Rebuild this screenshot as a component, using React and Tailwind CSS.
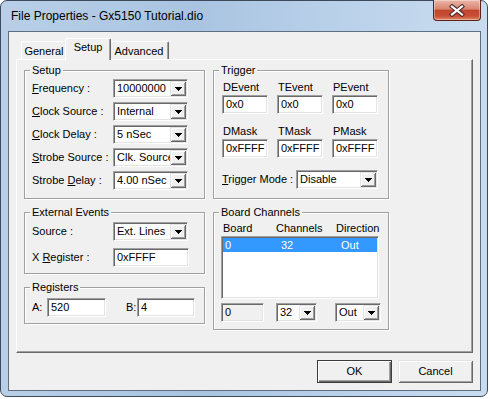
import React from "react";

const sunken =
  "border border-t-[#a0a0a0] border-l-[#a0a0a0] border-r-white border-b-white shadow-[inset_1px_1px_0_#696969,inset_-1px_-1px_0_#e3e3e3]";
const raised =
  "bg-[#f0f0f0] shadow-[inset_1px_1px_0_#e3e3e3,inset_-1px_-1px_0_#696969,inset_2px_2px_0_#fff,inset_-2px_-2px_0_#a0a0a0]";

function DownArrow() {
  return (
    <svg width="7" height="4" viewBox="0 0 7 4" shapeRendering="crispEdges">
      <path d="M0 0h7v1H0zM1 1h5v1H1zM2 2h3v1H2zM3 3h1v1H3z" fill="#000" />
    </svg>
  );
}

function Combo({ value, className = "" }) {
  return (
    <div className={`flex h-[19px] bg-white p-[1px] ${sunken} ${className}`}>
      <span className="flex-1 overflow-hidden whitespace-nowrap pl-[2px] leading-[15px]">
        {value}
      </span>
      <div className={`flex h-[15px] w-[16px] shrink-0 items-center justify-center ${raised}`}>
        <DownArrow />
      </div>
    </div>
  );
}

function Edit({ value, className = "", bg = "bg-white" }) {
  return (
    <div className={`h-[19px] p-[1px] ${bg} ${sunken} ${className}`}>
      <span className="block overflow-hidden whitespace-nowrap pl-[2px] leading-[15px]">
        {value}
      </span>
    </div>
  );
}

function Group({ title, className = "", children }) {
  return (
    <div
      className={`relative border border-[#a0a0a0] shadow-[inset_1px_1px_0_#fff,1px_1px_0_#fff] ${className}`}
    >
      <span className="absolute left-[5px] top-[-7px] bg-[#f0f0f0] px-[2px] leading-[13px]">
        {title}
      </span>
      {children}
    </div>
  );
}

function Tab({ className = "", children }) {
  return (
    <div
      className={`h-[18px] rounded-t-[2px] border-l border-t border-r border-l-white border-t-white border-r-[#696969] pt-[3px] text-center leading-[13px] shadow-[inset_-1px_0_0_#a0a0a0] ${className}`}
    >
      {children}
    </div>
  );
}

function Row({ label, children }) {
  return (
    <div className="flex h-[19px] items-center">
      <span className="w-[81px] whitespace-nowrap">{label}</span>
      {children}
    </div>
  );
}

function CloseButton() {
  return (
    <div className="-mt-[1px] flex h-[21px] w-[48px] items-center justify-center rounded-b-[4px] border border-t-0 border-[#5a2218] bg-[linear-gradient(180deg,#ebb6a9_0%,#d98672_45%,#c2442f_52%,#c84e36_80%,#df8a65_100%)] shadow-[inset_0_0_0_1px_rgba(255,255,255,0.35)]">
      <svg width="16" height="13" viewBox="0 0 16 13">
        <path d="M3 2.5 L13 10.5 M13 2.5 L3 10.5" stroke="#4a2a2a" strokeWidth="4.2" strokeLinecap="square" />
        <path d="M3 2.5 L13 10.5 M13 2.5 L3 10.5" stroke="#fff" strokeWidth="2.2" strokeLinecap="square" />
      </svg>
    </div>
  );
}

export default function App() {
  return (
    <div className="h-[399px] w-[490px] bg-white text-[11px] text-black font-['Liberation_Sans',Arial,sans-serif]">
      <div className="flex h-[397px] w-[488px] flex-col rounded-[7px] border border-[#3c4a5c] bg-[linear-gradient(90deg,#b9cfe7,#a9c4e1_40%,#bdd3eb_75%,#c9dcef)] pb-[5px] pl-[7px] pr-[6px]">
        {/* title bar */}
        <div className="flex h-[30px] justify-between">
          <div className="pl-[3px] pt-[7px] text-[12px] leading-[16px]">
            File Properties - Gx5150 Tutorial.dio
          </div>
          <CloseButton />
        </div>

        {/* client area */}
        <div className="flex flex-1 flex-col border border-[#5f6f82] bg-[#f0f0f0]">
          <div className="mt-[6px] flex h-[21px] items-end pl-[12px]">
            <Tab className="w-[46px]">General</Tab>
            <div className="relative z-10 -mx-[2px] -mb-[1px] h-[22px] w-[46px] rounded-t-[2px] border-l border-t border-r border-l-white border-t-white border-r-[#696969] bg-[#f0f0f0] pt-[2px] text-center leading-[13px] shadow-[inset_-1px_0_0_#a0a0a0]">
              Setup
            </div>
            <Tab className="w-[60px]">Advanced</Tab>
          </div>

          <div className="ml-[7px] flex h-[294px] w-[457px] gap-[8px] border border-b-[#696969] border-l-white border-r-[#696969] border-t-white pl-[7px] pt-[10px] shadow-[inset_-1px_-1px_0_#a0a0a0]">
            {/* left column */}
            <div className="flex w-[181px] flex-col gap-[13px]">
              <Group title="Setup" className="h-[129px]">
                <div className="flex flex-col gap-[4px] pl-[7px] pt-[8px]">
                  <Row label={<><u>F</u>requency :</>}>
                    <Combo value="10000000" className="w-[75px]" />
                  </Row>
                  <Row label={<><u>C</u>lock Source :</>}>
                    <Combo value="Internal" className="w-[75px]" />
                  </Row>
                  <Row label={<><u>C</u>lock Delay :</>}>
                    <Combo value="5 nSec" className="w-[75px]" />
                  </Row>
                  <Row label={<><u>S</u>trobe Source :</>}>
                    <Combo value="Clk. Source" className="w-[75px]" />
                  </Row>
                  <Row label={<>Strobe <u>D</u>elay :</>}>
                    <Combo value="4.00 nSec" className="w-[75px]" />
                  </Row>
                </div>
              </Group>

              <Group title="External Events" className="h-[62px]">
                <div className="flex flex-col gap-[7px] pl-[7px] pt-[9px]">
                  <Row label="Source :">
                    <Combo value="Ext. Lines" className="w-[75px]" />
                  </Row>
                  <Row label={<>X <u>R</u>egister :</>}>
                    <Edit value="0xFFFF" className="w-[76px]" />
                  </Row>
                </div>
              </Group>

              <Group title="Registers" className="h-[37px]">
                <div className="mt-[10px] flex h-[19px] items-center pl-[7px]">
                  <span className="w-[15px]">A:</span>
                  <Edit value="520" className="w-[59px]" />
                  <span className="ml-[20px] w-[11px]">B:</span>
                  <Edit value="4" className="w-[58px]" />
                </div>
              </Group>
            </div>

            {/* right column */}
            <div className="flex w-[176px] flex-col gap-[13px]">
              <Group title="Trigger" className="h-[129px]">
                <div className="flex flex-col pl-[8px] pt-[10px]">
                  <div className="grid grid-cols-[46px_46px_46px] gap-x-[9px] leading-[13px]">
                    <span className="pl-[1px]">DEvent</span>
                    <span className="pl-[1px]">TEvent</span>
                    <span className="pl-[1px]">PEvent</span>
                  </div>
                  <div className="mt-[1px] grid grid-cols-[46px_46px_46px] gap-x-[9px]">
                    <Edit value="0x0" />
                    <Edit value="0x0" />
                    <Edit value="0x0" />
                  </div>
                  <div className="mt-[11px] grid grid-cols-[46px_46px_46px] gap-x-[9px] leading-[13px]">
                    <span className="pl-[1px]">DMask</span>
                    <span className="pl-[1px]">TMask</span>
                    <span className="pl-[1px]">PMask</span>
                  </div>
                  <div className="mt-[1px] grid grid-cols-[46px_46px_46px] gap-x-[9px]">
                    <Edit value="0xFFFF" />
                    <Edit value="0xFFFF" />
                    <Edit value="0xFFFF" />
                  </div>
                  <div className="mt-[12px] flex h-[19px] items-center">
                    <span className="w-[74px] whitespace-nowrap">
                      <u>T</u>rigger Mode :
                    </span>
                    <Combo value="Disable" className="w-[82px]" />
                  </div>
                </div>
              </Group>

              <Group title="Board Channels" className="h-[118px]">
                <div className="flex flex-col pl-[7px] pt-[9px]">
                  <div className="grid grid-cols-[53px_60px_auto] pl-[2px] leading-[13px]">
                    <span>Board</span>
                    <span>Channels</span>
                    <span>Direction</span>
                  </div>
                  <div className={`mt-[1px] h-[63px] w-[158px] bg-white p-[1px] ${sunken}`}>
                    <div className="grid h-[14px] grid-cols-[56px_60px_auto] bg-[#3399ff] pl-[2px] leading-[14px] text-white">
                      <span>0</span>
                      <span>32</span>
                      <span>Out</span>
                    </div>
                  </div>
                  <div className="mt-[4px] flex">
                    <Edit value="0" bg="bg-[#f0f0f0]" className="w-[43px]" />
                    <Combo value="32" className="ml-[12px] w-[41px]" />
                    <Combo value="Out" className="ml-[18px] w-[46px]" />
                  </div>
                </div>
              </Group>
            </div>
          </div>

          <div className="mt-[7px] flex justify-end gap-[6px] pr-[7px]">
            <div className="h-[23px] w-[75px] border border-[#3c3c3c] bg-[#f0f0f0] text-center leading-[21px] shadow-[inset_1px_1px_0_#fff,inset_-1px_-1px_0_#696969,inset_-2px_-2px_0_#a0a0a0]">
              OK
            </div>
            <div className={`h-[23px] w-[75px] text-center leading-[23px] ${raised}`}>
              Cancel
            </div>
          </div>
        </div>
      </div>
    </div>
  );
}
